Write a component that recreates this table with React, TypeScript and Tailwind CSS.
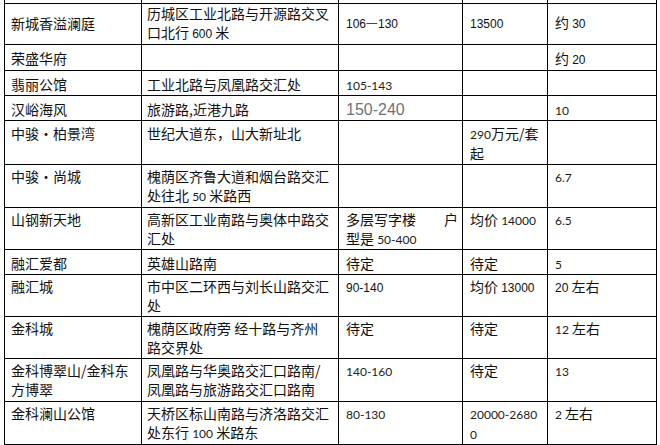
import type { ReactNode } from "react";

// digits set in the narrow "SimSun" style of the source document
function S({ children }: { children: ReactNode }) {
  return <span className="font-['Liberation_Sans',sans-serif] text-[12px]">{children}</span>;
}

// digits set in the rounder "Calibri" style
function C({ children }: { children: ReactNode }) {
  return <span className="font-['Lato',sans-serif] text-[12px] text-[#1c1c1c]">{children}</span>;
}

interface Row {
  h: string;
  pad: string;
  cells: ReactNode[];
}

const rows: Row[] = [
  {
    h: "h-[41px]",
    pad: "align-middle py-0",
    cells: [
      "新城香溢澜庭",
      <>
        历城区工业北路与开源路交叉
        <br />
        口北行 <S>600</S> 米
      </>,
      <S>106一130</S>,
      <S>13500</S>,
      <>
        约 <S>30</S>
      </>,
    ],
  },
  {
    h: "h-[25px]",
    pad: "align-top pt-[4px] pb-0",
    cells: [
      "荣盛华府",
      "",
      "",
      "",
      <>
        约 <S>20</S>
      </>,
    ],
  },
  {
    h: "h-[25px]",
    pad: "align-top pt-[4px] pb-0",
    cells: ["翡丽公馆", "工业北路与凤凰路交汇处", <C>105-143</C>, "", ""],
  },
  {
    h: "h-[25px]",
    pad: "align-top pt-[4px] pb-0",
    cells: [
      "汉峪海风",
      "旅游路,近港九路",
      <span className="font-['Liberation_Sans',sans-serif] text-[16px] leading-[18px] text-[#6f7377]">
        150-240
      </span>,
      "",
      <C>10</C>,
    ],
  },
  {
    h: "h-[44px]",
    pad: "align-top pt-[3px] pb-0",
    cells: [
      "中骏・柏景湾",
      "世纪大道东，山大新址北",
      "",
      <>
        <C>290</C>万元/套
        <br />起
      </>,
      "",
    ],
  },
  {
    h: "h-[43px]",
    pad: "align-top pt-[2px] pb-0",
    cells: [
      "中骏・尚城",
      <>
        槐荫区齐鲁大道和烟台路交汇
        <br />
        处往北 <C>50</C> 米路西
      </>,
      "",
      "",
      <C>6.7</C>,
    ],
  },
  {
    h: "h-[42px]",
    pad: "align-top pt-[2px] pb-0",
    cells: [
      "山钢新天地",
      <>
        高新区工业南路与奥体中路交
        <br />
        汇处
      </>,
      <>
        多层写字楼　　户
        <br />
        型是 <C>50-400</C>
      </>,
      <>
        均价 <C>14000</C>
      </>,
      <C>6.5</C>,
    ],
  },
  {
    h: "h-[25px]",
    pad: "align-top pt-[4px] pb-0",
    cells: ["融汇爱都", "英雄山路南", "待定", "待定", <C>5</C>],
  },
  {
    h: "h-[42px]",
    pad: "align-top pt-[2px] pb-0",
    cells: [
      "融汇城",
      <>
        市中区二环西与刘长山路交汇
        <br />处
      </>,
      <S>90-140</S>,
      <>
        均价 <S>13000</S>
      </>,
      <>
        <S>20</S> 左右
      </>,
    ],
  },
  {
    h: "h-[42px]",
    pad: "align-top pt-[2px] pb-0",
    cells: [
      "金科城",
      <>
        槐荫区政府旁 经十路与齐州
        <br />
        路交界处
      </>,
      "待定",
      "待定",
      <>
        <C>12</C> 左右
      </>,
    ],
  },
  {
    h: "h-[43px]",
    pad: "align-top pt-[2px] pb-0",
    cells: [
      <>
        金科博翠山/金科东
        <br />
        方博翠
      </>,
      <>
        凤凰路与华奥路交汇口路南/
        <br />
        凤凰路与旅游路交汇口路南
      </>,
      <C>140-160</C>,
      "待定",
      <C>13</C>,
    ],
  },
  {
    h: "h-[42px]",
    pad: "align-top pt-[2px] pb-0",
    cells: [
      "金科澜山公馆",
      <>
        天桥区标山南路与济洛路交汇
        <br />
        处东行 <C>100</C> 米路东
      </>,
      <C>80-130</C>,
      <>
        <C>20000-2680</C>
        <br />
        <C>0</C>
      </>,
      <>
        <C>2</C> 左右
      </>,
    ],
  },
  { h: "h-[40px]", pad: "p-0", cells: ["", "", "", "", ""] },
];

const padding = ["pl-[6px]", "pl-[5px]", "pl-[7px]", "pl-[7px]", "pl-[7px]"];

export default function App() {
  return (
    <div className="h-[445px] w-[660px] overflow-hidden bg-white">
      <table className="ml-[4px] w-[652px] table-fixed border-collapse font-['Noto_Sans_CJK_SC',sans-serif] text-[14px] leading-[19px] text-[#111]">
        <colgroup>
          <col className="w-[137px]" />
          <col className="w-[197px]" />
          <col className="w-[124px]" />
          <col className="w-[85px]" />
          <col className="w-[109px]" />
        </colgroup>
        <tbody>
          <tr className="h-[3px]">
            {padding.map((_, i) => (
              <td key={i} className="border-x border-b border-black p-0" />
            ))}
          </tr>
          {rows.map((row, r) => (
            <tr key={r} className={row.h}>
              {row.cells.map((cell, i) => (
                <td
                  key={i}
                  className={`border border-black whitespace-nowrap pr-[2px] ${padding[i]} ${row.pad}`}
                >
                  {cell}
                </td>
              ))}
            </tr>
          ))}
        </tbody>
      </table>
    </div>
  );
}
